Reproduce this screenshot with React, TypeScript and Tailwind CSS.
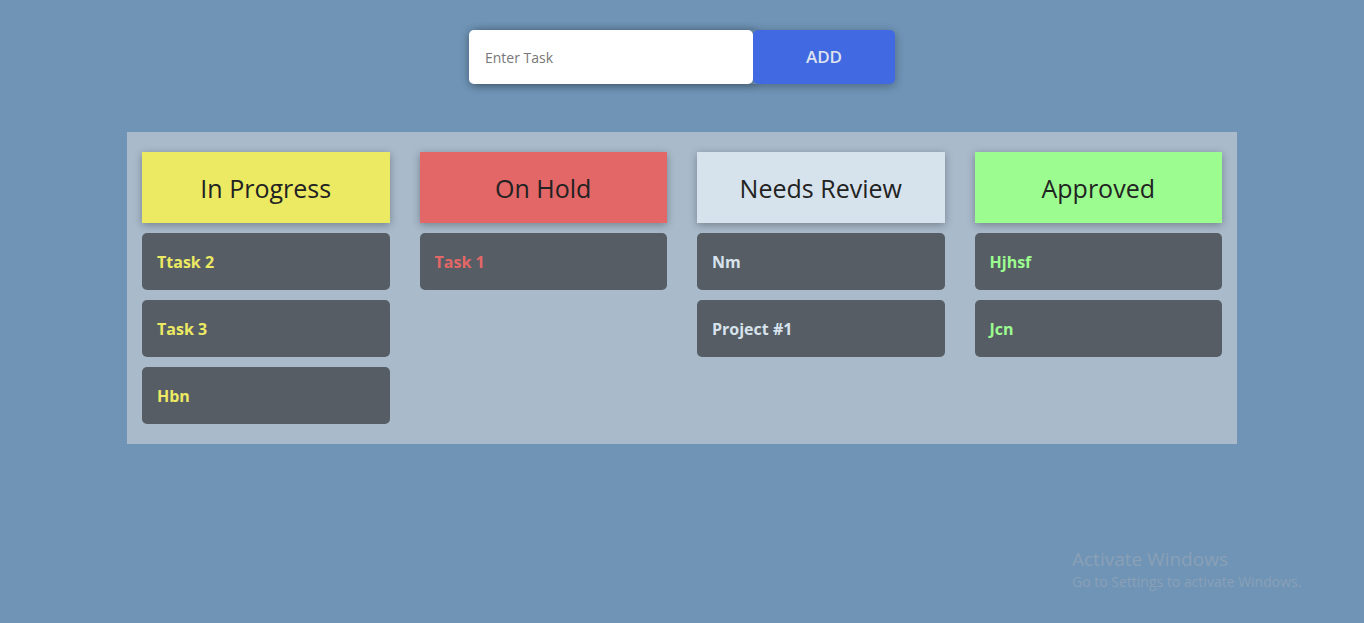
import React from "react";

const columns = [
  { title: "In Progress", head: "bg-[#ecea62]", text: "text-[#ecea62]", tasks: ["Ttask 2", "Task 3", "Hbn"] },
  { title: "On Hold", head: "bg-[#e46767]", text: "text-[#e46767]", tasks: ["Task 1"] },
  { title: "Needs Review", head: "bg-[#d7e3ec]", text: "text-[#d7e3ec]", tasks: ["Nm", "Project #1"] },
  { title: "Approved", head: "bg-[#9cfc8f]", text: "text-[#9cfc8f]", tasks: ["Hjhsf", "Jcn"] },
];

export default function App() {
  return (
    <div className="relative min-h-[623px] w-full bg-[#6f94b6] pt-[30px] font-['Open_Sans','Noto_Sans',sans-serif]">
      <div className="flex justify-center">
        <div className="flex h-[54px] shadow-[0_2px_10px_rgba(0,0,0,0.3)] rounded-[5px]">
          <input
            className="h-full w-[284px] rounded-[5px] bg-white pl-4 text-[14px] text-[#333] outline-none shadow-[4px_0_8px_rgba(0,0,0,0.25)] placeholder:text-[#777]"
            placeholder="Enter Task"
          />
          <button className="h-full w-[142px] rounded-[5px] bg-[#4169e1] text-[17px] font-semibold text-[#dfe3ee]">
            ADD
          </button>
        </div>
      </div>
      <div className="mx-auto mt-[48px] grid w-[1110px] grid-cols-4 gap-[30px] bg-[#a9bacb] px-[15px] pt-[20px] pb-[20px]">
        {columns.map((c) => (
          <div key={c.title} className="flex flex-col gap-[10px]">
            <div className={`flex h-[71px] items-center justify-center ${c.head} text-[25px] font-medium text-[#222] shadow-[0_2px_8px_rgba(0,0,0,0.3)]`}>
              <span className="pt-[2px]">{c.title}</span>
            </div>
            {c.tasks.map((t) => (
              <div key={t} className={`flex h-[57px] items-center rounded-[5px] bg-[#565d65] pl-[15px] text-[16px] font-bold ${c.text}`}>
                {t}
              </div>
            ))}
          </div>
        ))}
      </div>
      <div className="absolute left-[1072px] top-[548px] text-[#8aa0b6] leading-tight">
        <div className="text-[19px]">Activate Windows</div>
        <div className="text-[14px] mt-[1px]">Go to Settings to activate Windows.</div>
      </div>
    </div>
  );
}
